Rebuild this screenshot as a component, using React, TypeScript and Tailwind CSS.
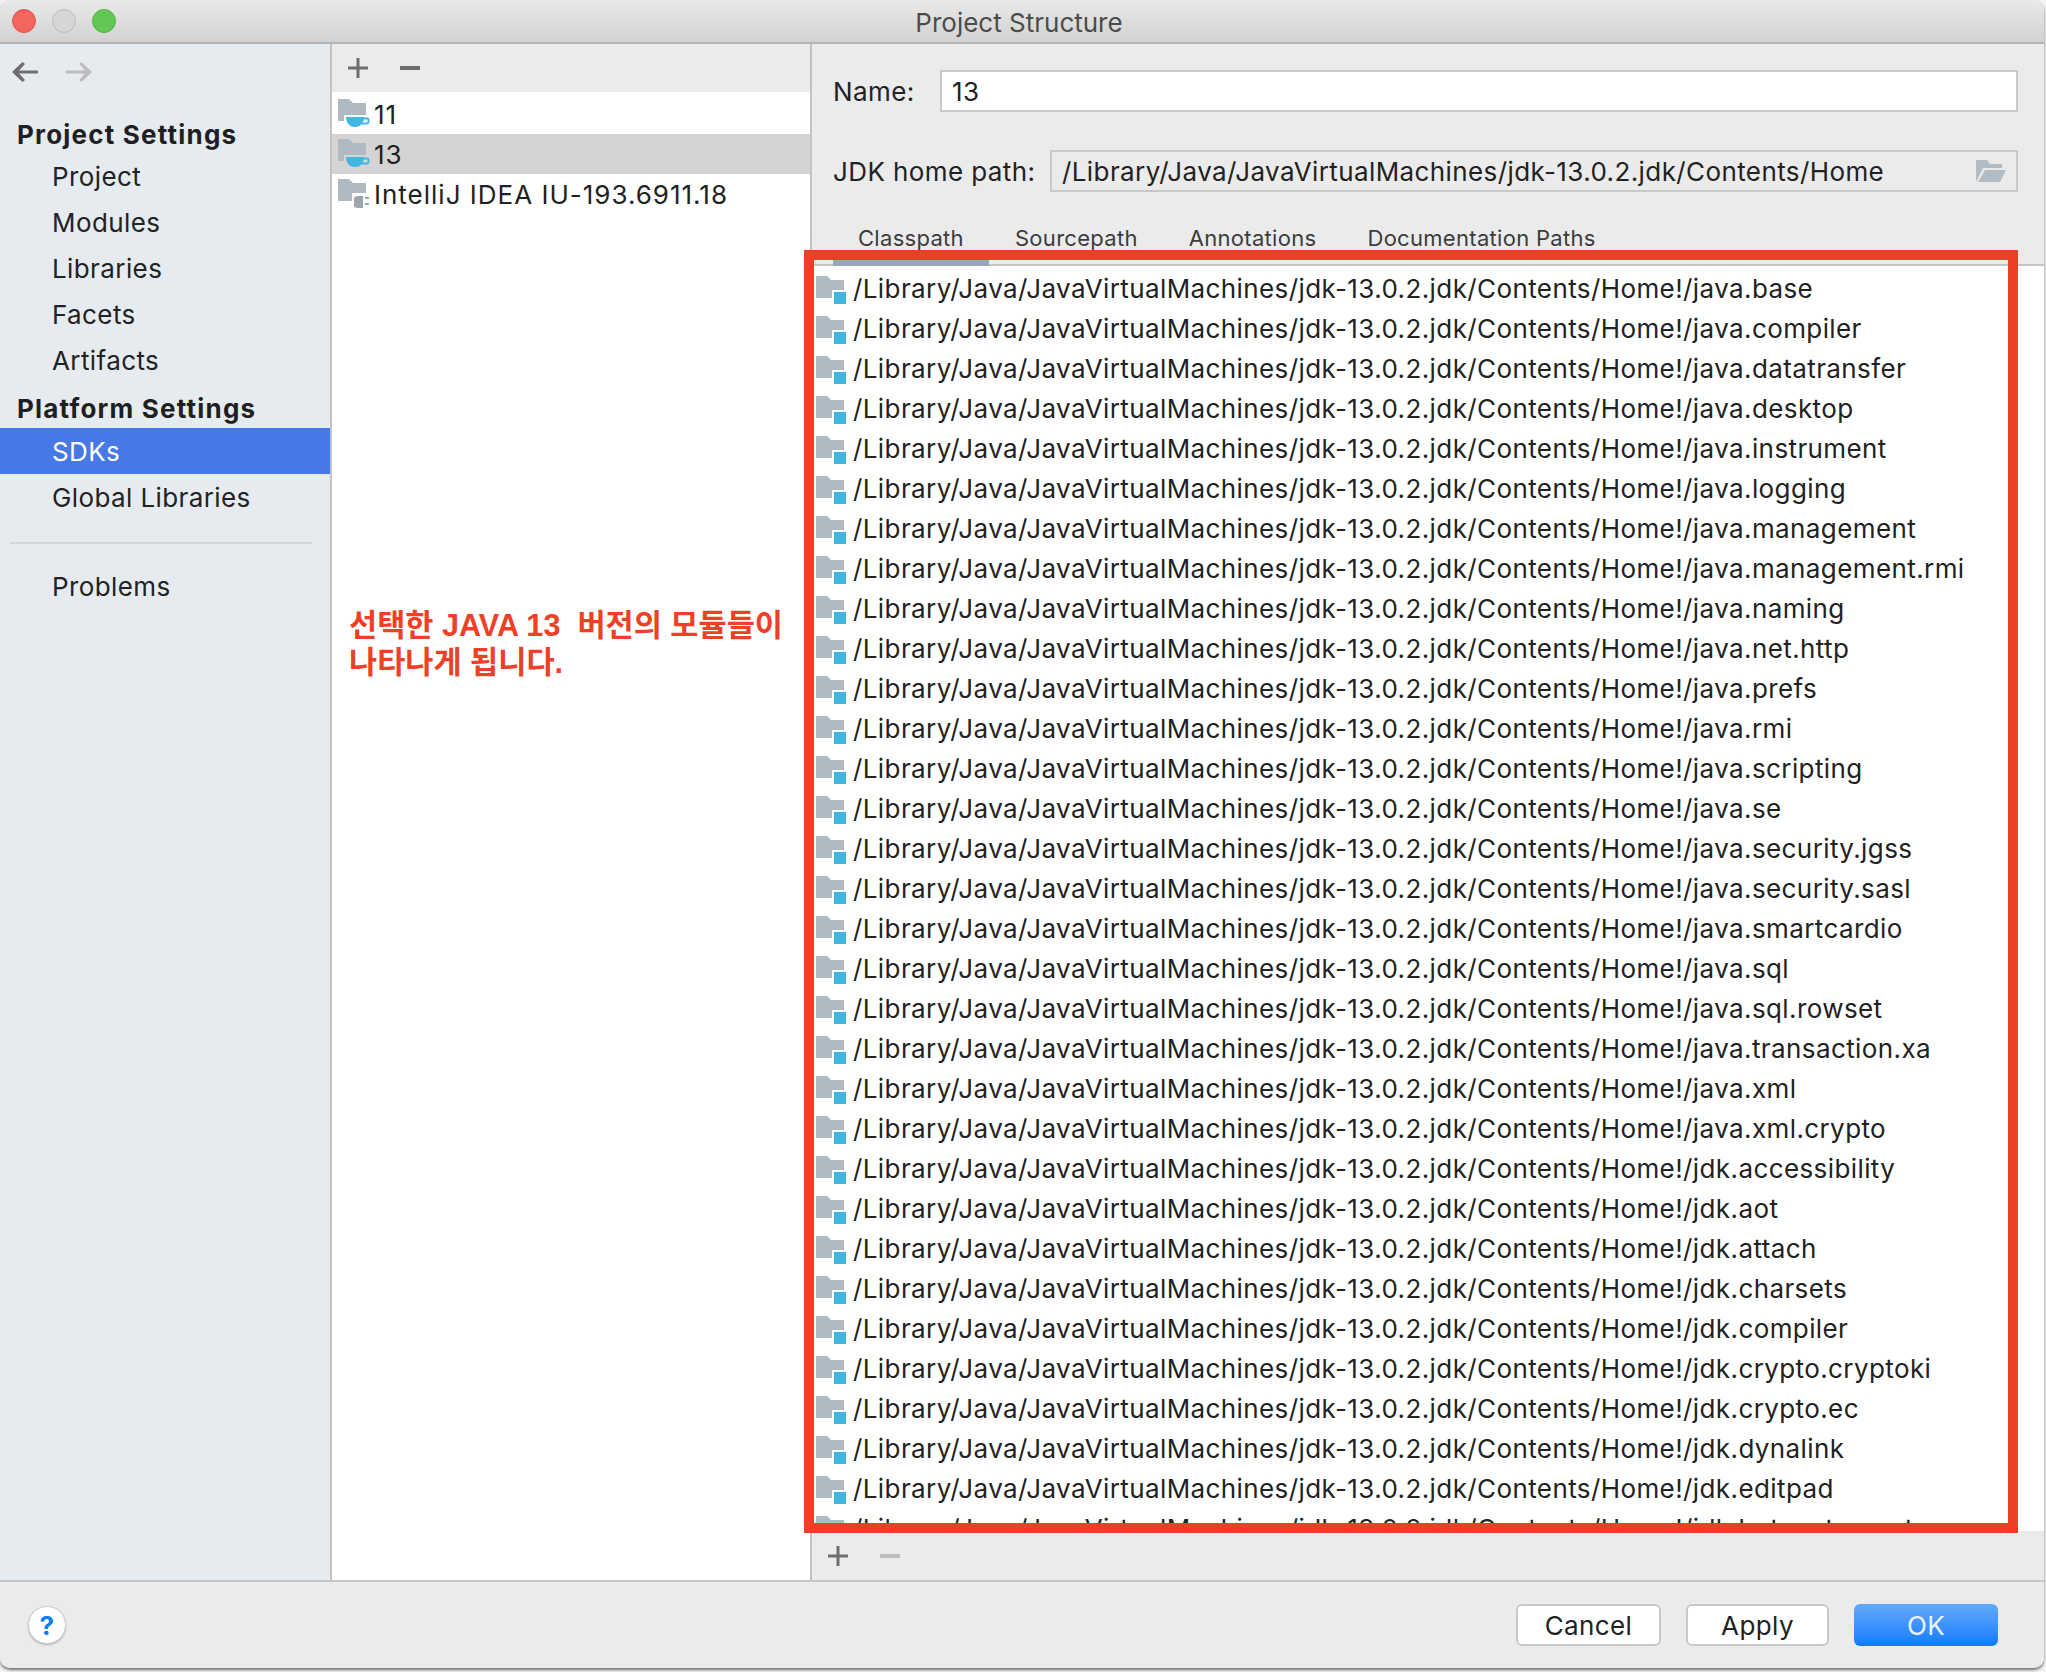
import React from "react";

const HOME = "/Library/Java/JavaVirtualMachines/jdk-13.0.2.jdk/Contents/Home!/";

const modules = [
  "java.base", "java.compiler", "java.datatransfer", "java.desktop", "java.instrument", "java.logging",
  "java.management", "java.management.rmi", "java.naming", "java.net.http", "java.prefs", "java.rmi",
  "java.scripting", "java.se", "java.security.jgss", "java.security.sasl", "java.smartcardio", "java.sql",
  "java.sql.rowset", "java.transaction.xa", "java.xml", "java.xml.crypto", "jdk.accessibility", "jdk.aot",
  "jdk.attach", "jdk.charsets", "jdk.compiler", "jdk.crypto.cryptoki", "jdk.crypto.ec", "jdk.dynalink",
  "jdk.editpad", "jdk.hotspot.agent",
];

const FOLDER = "M0 0H11L15 4H28V22H0Z";

const ModuleIcon = () => (
  <svg width="30" height="28" viewBox="0 0 30 28" className="shrink-0 mt-[3px]">
    <path d={FOLDER} fill="#afbac2" />
    <rect x="16" y="14" width="14" height="14" fill="#fff" />
    <rect x="18" y="16" width="12" height="12" fill="#40b6e0" />
  </svg>
);

const JdkIcon = ({ bg = "#fff" }: { bg?: string }) => (
  <svg width="32" height="30" viewBox="0 0 32 30" className="shrink-0">
    <path d={FOLDER} fill="#afbac2" />
    <path d="M6 16H28V28H6Z" fill={bg} />
    <path d="M8 18H26C26 23 23 28 17 28C11 28 8 23 8 18Z" fill="#40b6e0" />
    <path d="M25 19.5H29.5C31 19.5 31 24.5 29 24.5H23.5" fill="none" stroke="#40b6e0" strokeWidth="2" />
  </svg>
);

const PluginIcon = () => (
  <svg width="32" height="30" viewBox="0 0 32 30" className="shrink-0">
    <path d={FOLDER} fill="#afbac2" />
    <rect x="14" y="14" width="18" height="16" fill="#fff" />
    <path d="M20 17H25V29H20C18 29 16 28 16 27V19C16 18 18 17 20 17Z" fill="#9aa7b0" />
    <rect x="27" y="18" width="4" height="2" fill="#9aa7b0" />
    <rect x="27" y="24" width="4" height="2" fill="#9aa7b0" />
  </svg>
);

const Plus = ({ color = "#6e6e6e" }: { color?: string }) => (
  <svg width="20" height="20" viewBox="0 0 20 20">
    <path d="M8.5 0H11.5V8.5H20V11.5H11.5V20H8.5V11.5H0V8.5H8.5Z" fill={color} />
  </svg>
);

const Minus = ({ color = "#6e6e6e" }: { color?: string }) => (
  <svg width="20" height="20" viewBox="0 0 20 20">
    <rect x="0" y="8" width="20" height="4" fill={color} />
  </svg>
);

const Arrow = ({ color, flip }: { color: string; flip?: boolean }) => (
  <svg width="26" height="20" viewBox="0 0 26 20" className={flip ? "-scale-x-100" : ""}>
    <path d="M26 8.5V11.5H7L13 18L10.5 20L0 10L10.5 0L13 2L7 8.5Z" fill={color} />
  </svg>
);

const NavItem = ({ label, active }: { label: string; active?: boolean }) => (
  <div className={`h-[46px] flex items-center pl-[52px] text-[26px] tracking-[0.4px] ${active ? "bg-[#4679e6] text-white" : "text-[#222]"}`}>
    {label}
  </div>
);

const NavHeader = ({ label, className }: { label: string; className: string }) => (
  <div className={`flex items-center pl-[17px] text-[26px] font-bold tracking-[1.2px] text-[#1f1f1f] ${className}`}>{label}</div>
);

const Sidebar = () => (
  <div className="w-[332px] shrink-0 bg-[#e6ebf0] border-r-2 border-[#c2c2c2]">
    <div className="h-[56px] mb-[11px] flex items-center gap-[28px] pl-[12px]">
      <Arrow color="#6e6e6e" />
      <Arrow color="#bdbdbd" flip />
    </div>
    <NavHeader label="Project Settings" className="h-[42px] pt-[4px]" />
    {["Project", "Modules", "Libraries", "Facets", "Artifacts"].map((l) => (
      <NavItem key={l} label={l} />
    ))}
    <NavHeader label="Platform Settings" className="h-[45px] pt-[6px]" />
    <NavItem label="SDKs" active />
    <NavItem label="Global Libraries" />
    <div className="ml-[10px] mr-[18px] mt-[22px] mb-[19px] h-[2px] bg-[#d2d6da]" />
    <NavItem label="Problems" />
  </div>
);

const JdkRow = ({ label, icon, selected }: { label: string; icon: React.ReactNode; selected?: boolean }) => (
  <div className={`h-[40px] flex items-center gap-[4px] pl-[6px] text-[26px] tracking-[1px] text-[#222] ${selected ? "bg-[#d4d4d4]" : ""}`}>
    {icon}
    <span>{label}</span>
  </div>
);

const JdkList = () => (
  <div className="w-[480px] shrink-0 flex flex-col bg-white border-r-2 border-[#c2c2c2]">
    <div className="h-[48px] shrink-0 bg-[#ebebeb] flex items-center gap-[32px] pl-[16px]">
      <Plus />
      <Minus />
    </div>
    <div className="pt-[2px]">
      <JdkRow label="11" icon={<JdkIcon />} />
      <JdkRow label="13" icon={<JdkIcon bg="#d4d4d4" />} selected />
      <JdkRow label="IntelliJ IDEA IU-193.6911.18" icon={<PluginIcon />} />
    </div>
    <p className="mt-[393px] pl-[17px] text-[30.6px] leading-[37px] font-bold text-[#ee4026] whitespace-pre font-['Liberation_Sans','Noto_Sans_CJK_KR',sans-serif]">
      {"선택한 JAVA 13  버전의 모듈들이\n나타나게 됩니다."}
    </p>
  </div>
);

const tabs = ["Classpath", "Sourcepath", "Annotations", "Documentation Paths"];

const Detail = () => (
  <div className="flex-1 min-w-0 flex flex-col bg-[#ebebeb] tracking-[0.4px]">
    <div className="h-[176px] shrink-0 px-[21px]">
      <div className="flex items-center h-[42px] mt-[26px]">
        <span className="w-[107px] text-[26px] text-[#222]">Name:</span>
        <div className="w-[1078px] h-[42px] bg-white border-2 border-[#c9c9c9] flex items-center pl-[10px] text-[26px] text-[#222]">13</div>
      </div>
      <div className="flex items-center h-[42px] mt-[38px]">
        <span className="w-[217px] text-[26px] text-[#222]">JDK home path:</span>
        <div className="w-[968px] h-[42px] border-2 border-[#c9c9c9] flex items-center justify-between pl-[10px] pr-[10px] text-[26px] text-[#222]">
          <span>/Library/Java/JavaVirtualMachines/jdk-13.0.2.jdk/Contents/Home</span>
          <svg width="30" height="22" viewBox="0 0 30 22">
            <path d="M0 0H11L14 4H26V8H7L0 22Z" fill="#b4bcc3" />
            <path d="M9 10H30L24 22H2Z" fill="#b4bcc3" />
          </svg>
        </div>
      </div>
    </div>
    <div className="h-[46px] shrink-0 flex border-b-2 border-[#c6c6c6] pl-[20.5px]">
      {tabs.map((t, i) => (
        <div key={t} className={`px-[25.5px] h-[46px] pt-[2px] text-[22px] tracking-[0.3px] text-[#3c3c3c] ${i === 0 ? "border-b-[6px] border-[#9ca6b8]" : ""}`}>
          {t}
        </div>
      ))}
    </div>
    <div className="flex-1 min-h-0 overflow-hidden bg-white pl-[4px] pt-[2px]">
      {modules.map((m) => (
        <div key={m} className="h-[40px] flex items-center gap-[7px] text-[26px] text-[#222] whitespace-nowrap">
          <ModuleIcon />
          <span>{HOME + m}</span>
        </div>
      ))}
    </div>
    <div className="h-[49px] shrink-0 flex items-center gap-[32px] pl-[16px] bg-[#ebebeb]">
      <Plus />
      <Minus color="#bdbdbd" />
    </div>
  </div>
);

const Footer = () => (
  <div className="h-[88px] shrink-0 bg-[#ebebeb] border-t-2 border-[#c6c6c6] flex items-center px-[28px] tracking-[0.4px]">
    <div className="w-[38px] h-[38px] rounded-full bg-white border border-[#cfcfcf] shadow-[0_1px_2px_rgba(0,0,0,0.25)] flex items-center justify-center text-[26px] font-bold text-[#0a7cff]">?</div>
    <div className="ml-auto flex gap-[25px] pr-[18px]">
      <button className="w-[145px] h-[42px] rounded-[6px] bg-white border-2 border-[#c9c9c9] text-[26px] text-[#222]">Cancel</button>
      <button className="w-[143px] h-[42px] rounded-[6px] bg-white border-2 border-[#c9c9c9] text-[26px] text-[#222]">Apply</button>
      <button className="w-[144px] h-[42px] rounded-[6px] bg-gradient-to-b from-[#62a9fb] to-[#0a7bff] text-[26px] text-[#eef4ff]">OK</button>
    </div>
  </div>
);

export default function App() {
  return (
    <div className="w-[2046px] h-[1672px] bg-[#f4f4f4] font-['Inter','Noto_Sans',sans-serif] overflow-hidden relative">
      <div className="w-[2044px] h-[1668px] flex flex-col bg-[#ebebeb] rounded-[10px] overflow-hidden shadow-[0_2px_3px_rgba(0,0,0,0.55)] relative">
        <div className="h-[44px] shrink-0 flex items-center relative bg-gradient-to-b from-[#e9e9e9] to-[#d2d2d2] border-b-2 border-[#b5b5b5]">
          <div className="flex gap-[16px] pl-[12px]">
            <span className="w-[24px] h-[24px] rounded-full bg-[#f2665f] border border-[#e0534c]" />
            <span className="w-[24px] h-[24px] rounded-full bg-[#d6d6d6] border border-[#bdbdbd]" />
            <span className="w-[24px] h-[24px] rounded-full bg-[#62c755] border border-[#50b344]" />
          </div>
          <span className="absolute inset-x-0 pr-[6px] mt-[2px] text-center text-[26px] text-[#4c4c4c]">Project Structure</span>
        </div>
        <div className="flex-1 min-h-0 flex">
          <Sidebar />
          <JdkList />
          <Detail />
        </div>
        <Footer />
        {/* red highlight drawn over the classpath list */}
        <div className="absolute left-[804px] top-[250px] w-[1214px] h-[1283px] border-[10px] border-[#ee3e26]" />
      </div>
    </div>
  );
}
